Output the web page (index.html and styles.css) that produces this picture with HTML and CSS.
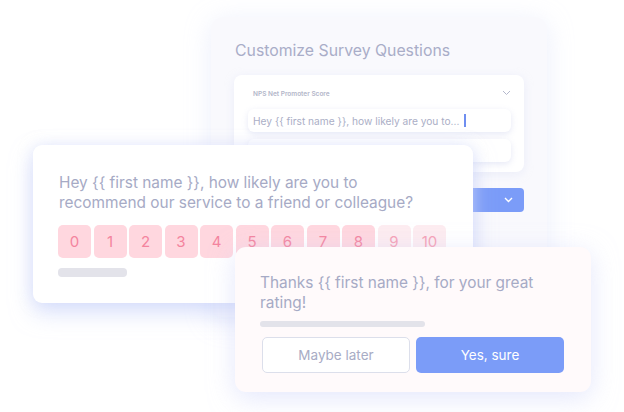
FILE: index.html
```html
<!DOCTYPE html>
<html>
<head>
<meta charset="utf-8">
<link rel="stylesheet" href="styles.css">
</head>
<body>
<div class="stage">
  <section class="card back">
    <h1 class="back-title">Customize Survey Questions</h1>
    <div class="panel">
      <div class="panel-head">
        <span class="panel-label">NPS Net Promoter Score</span>
        <svg class="chev" width="9" height="6" viewBox="0 0 9 6"><path d="M1 1l3.5 3.5L8 1" fill="none" stroke="#b4b8cc" stroke-width="1"/></svg>
      </div>
      <div class="field"><span class="field-text">Hey {{ first name }}, how likely are you to...</span><span class="caret"></span></div>
      <div class="field"></div>
    </div>
    <div class="select">
      <svg width="9" height="6" viewBox="0 0 9 6"><path d="M1 1l3.5 3.5L8 1" fill="none" stroke="#ffffff" stroke-width="1.4"/></svg>
    </div>
  </section>

  <section class="card question">
    <p class="q-text">Hey {{ first name }}, how likely are you to<br>recommend our service to a friend or colleague?</p>
    <div class="scale">
      <span class="score">0</span><span class="score">1</span><span class="score">2</span><span class="score">3</span><span class="score">4</span><span class="score">5</span><span class="score">6</span><span class="score">7</span><span class="score">8</span><span class="score light">9</span><span class="score light">10</span>
    </div>
    <div class="bar short"></div>
  </section>

  <section class="card thanks">
    <p class="t-text">Thanks {{ first name }}, for your great<br>rating!</p>
    <div class="bar long"></div>
    <div class="actions">
      <button class="btn ghost">Maybe later</button>
      <button class="btn primary">Yes, sure</button>
    </div>
  </section>
</div>
</body>
</html>
```

FILE: styles.css
```css
* { box-sizing: border-box; }
html, body { margin: 0; padding: 0; background: #ffffff; }
body { font-family: Inter, "Noto Sans", sans-serif; }
.stage { position: relative; width: 624px; height: 412px; overflow: hidden; }

.card { position: absolute; }

.back {
  left: 211px; top: 17px; width: 336px; height: 300px;
  background: #f9f9fd;
  border-radius: 12px;
  box-shadow: 0 4px 26px rgba(200, 208, 245, 0.35);
  padding: 24px 23px 0 24px;
  display: flex; flex-direction: column;
}
.back-title {
  margin: 0; font-size: 15.8px; font-weight: 400; color: #a9adc8;
  line-height: 20px;
}
.panel {
  margin-top: 14px; margin-left: -1px;
  background: #ffffff;
  border-radius: 8px;
  box-shadow: 0 2px 10px rgba(210, 215, 240, 0.35);
  height: 97px;
  padding: 11px 13px 0 14px;
  display: flex; flex-direction: column; gap: 7px;
}
.panel-head { display: flex; justify-content: space-between; align-items: center; padding: 0 0 0 5px; height: 16px; }
.panel-label { font-size: 6.5px; color: #b3b6c9; font-weight: 600; }
.chev { margin-top: -2px; }
.field {
  height: 23px; background: #ffffff; border-radius: 6px;
  box-shadow: 0 2px 6px rgba(200, 205, 235, 0.45);
  display: flex; align-items: center; padding-left: 5px;
}
.field-text { font-size: 10.2px; color: #aaaec6; }
.caret { width: 1.5px; height: 13px; background: #6f8ef0; margin-left: 5px; }
.select {
  margin-top: 16px; margin-left: auto; width: 160px; height: 24px;
  background: #7b9cf8; border-radius: 4px;
  display: flex; align-items: center; justify-content: flex-end; padding-right: 11px;
}

.question {
  left: 33px; top: 145px; width: 440px; height: 158px;
  background: #ffffff;
  border-radius: 9px;
  box-shadow: 0 10px 22px rgba(190, 202, 250, 0.55), 0 0 14px rgba(215, 222, 250, 0.5);
  padding: 28px 25px 0 26px;
}
.q-text {
  margin: 0; font-size: 15.4px; line-height: 20px; color: #a6aac5;
}
.scale { display: flex; gap: 2.5px; margin-top: 12px; margin-left: -1px; }
.score {
  width: 33px; height: 33px; border-radius: 5px; background: #ffd7df;
  color: #f4849e; font-size: 15px; display: flex; align-items: center; justify-content: center;
}
.score.light { background: #fdecf0; color: #f6a0b5; }
.bar { background: #e3e3ea; border-radius: 4px; }
.bar.short { width: 69px; height: 9px; margin-top: 10px; margin-left: -1px; }

.thanks {
  left: 235px; top: 247px; width: 356px; height: 145px;
  background: #fffafb;
  border-radius: 11px;
  box-shadow: 0 6px 26px rgba(205, 212, 250, 0.55);
  padding: 26px 27px 0 25px;
}
.t-text { margin: 0; font-size: 15.4px; line-height: 20px; color: #a6aac5; }
.bar.long { width: 165px; height: 6px; margin-top: 8px; }
.actions { display: flex; gap: 6px; margin-top: 10px; padding-left: 2px; }
.btn {
  width: 148px; height: 36px; border-radius: 5px; font-family: Inter, sans-serif;
  font-size: 13.5px; display: flex; align-items: center; justify-content: center;
}
.btn.ghost { background: #ffffff; border: 1.5px solid #dcdfeb; color: #a8acc5; }
.btn.primary { background: #7b9cf8; border: none; color: #ffffff; }
```
